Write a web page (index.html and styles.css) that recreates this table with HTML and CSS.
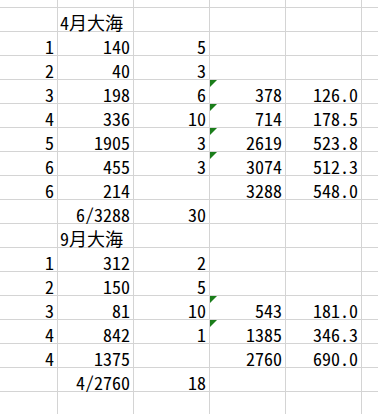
FILE: index.html
```html
<!DOCTYPE html>
<html lang="ja">
<head>
<meta charset="utf-8">
<title>Sheet</title>
<link rel="stylesheet" href="styles.css">
</head>
<body>
<div class="sheet">
  <div class="c"></div><div class="c"></div><div class="c"></div><div class="c"></div><div class="c"></div><div class="c"></div>

  <div class="c"></div><div class="c l">4月大海</div><div class="c"></div><div class="c"></div><div class="c"></div><div class="c"></div>
  <div class="c">1</div><div class="c">140</div><div class="c">5</div><div class="c"></div><div class="c"></div><div class="c"></div>
  <div class="c">2</div><div class="c">40</div><div class="c">3</div><div class="c"></div><div class="c"></div><div class="c"></div>
  <div class="c">3</div><div class="c">198</div><div class="c">6</div><div class="c f">378</div><div class="c">126.0</div><div class="c"></div>
  <div class="c">4</div><div class="c">336</div><div class="c">10</div><div class="c f">714</div><div class="c">178.5</div><div class="c"></div>
  <div class="c">5</div><div class="c">1905</div><div class="c">3</div><div class="c f">2619</div><div class="c">523.8</div><div class="c"></div>
  <div class="c">6</div><div class="c">455</div><div class="c">3</div><div class="c f">3074</div><div class="c">512.3</div><div class="c"></div>
  <div class="c">6</div><div class="c">214</div><div class="c"></div><div class="c">3288</div><div class="c">548.0</div><div class="c"></div>
  <div class="c"></div><div class="c">6/3288</div><div class="c">30</div><div class="c"></div><div class="c"></div><div class="c"></div>

  <div class="c"></div><div class="c l">9月大海</div><div class="c"></div><div class="c"></div><div class="c"></div><div class="c"></div>
  <div class="c">1</div><div class="c">312</div><div class="c">2</div><div class="c"></div><div class="c"></div><div class="c"></div>
  <div class="c">2</div><div class="c">150</div><div class="c">5</div><div class="c"></div><div class="c"></div><div class="c"></div>
  <div class="c">3</div><div class="c">81</div><div class="c">10</div><div class="c f">543</div><div class="c">181.0</div><div class="c"></div>
  <div class="c">4</div><div class="c">842</div><div class="c">1</div><div class="c f">1385</div><div class="c">346.3</div><div class="c"></div>
  <div class="c">4</div><div class="c">1375</div><div class="c"></div><div class="c">2760</div><div class="c">690.0</div><div class="c"></div>
  <div class="c"></div><div class="c">4/2760</div><div class="c">18</div><div class="c"></div><div class="c"></div><div class="c"></div>

  <div class="c"></div><div class="c"></div><div class="c"></div><div class="c"></div><div class="c"></div><div class="c"></div>
</div>
</body>
</html>
```
FILE: styles.css
```css
html, body {
  margin: 0;
  padding: 0;
  background: #ffffff;
}

body {
  width: 378px;
  height: 414px;
  overflow: hidden;
}

.sheet {
  display: grid;
  grid-template-columns: 57px 75px 75px 75px 75px 1fr;
  grid-template-rows: 7px repeat(16, 23px) 30px;
  gap: 1px;
  background: #d4d4d4;
  font-family: "Noto Sans Mono CJK JP", "Noto Sans CJK JP", monospace;
  font-size: 18px;
  color: #000000;
}

.c {
  background: #ffffff;
  display: flex;
  align-items: flex-end;
  justify-content: flex-end;
  padding: 0 3px 0 2px;
  line-height: 18px;
  white-space: nowrap;
  position: relative;
  min-width: 0;
}

.l {
  justify-content: flex-start;
}

.f::before {
  content: "";
  position: absolute;
  left: 0;
  top: 0;
  width: 0;
  height: 0;
  border-top: 7px solid #1a7d1a;
  border-right: 7px solid transparent;
}
```
